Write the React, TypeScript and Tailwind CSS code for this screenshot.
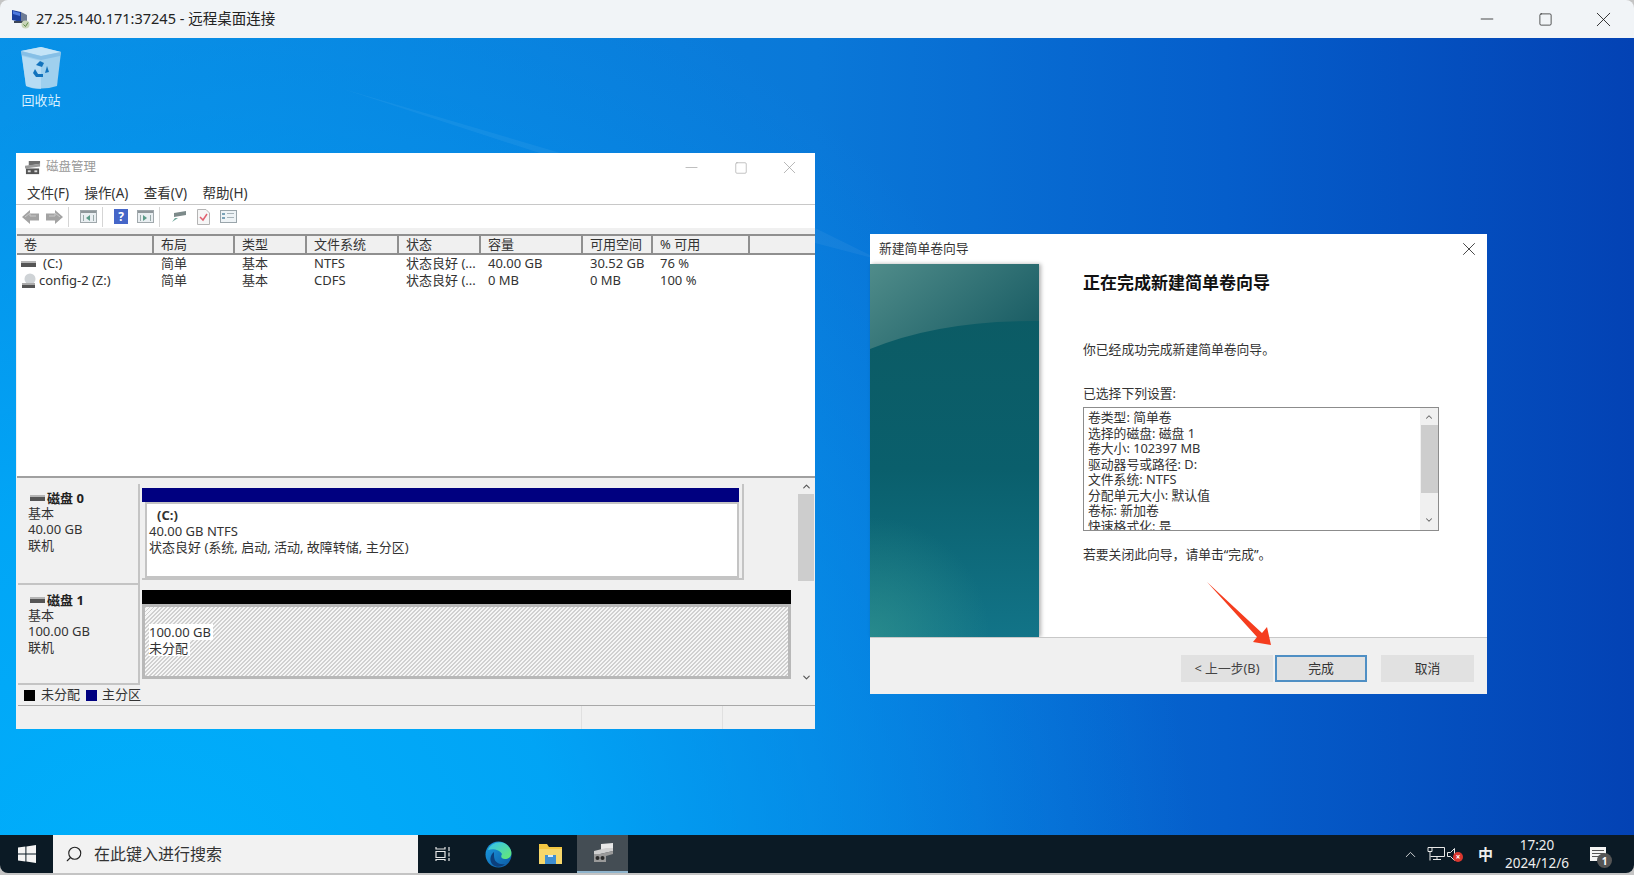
import { ChevronUp, ChevronDown, Minus, Square, X, Search } from 'lucide-react';

const uiFont = "font-['Noto_Sans','Noto_Sans_CJK_SC',sans-serif]";

function RecycleBin() {
  return (
    <svg width="42" height="44" viewBox="0 0 42 44">
      <path d="M1 5 L21 1 L41 6 L37 40 Q21 45 6 40 Z" fill="#9fd0ee" />
      <path d="M1 5 L21 1 L41 6 L21 10 Z" fill="#c4e4f7" />
      <path d="M1 5 L21 10 L41 6 L40 10 L21 14 L2 9 Z" fill="#86bfe6" />
      <path d="M6 40 L2 10 L21 15 L21 43 Q12 43 6 40 Z" fill="#bcdff5" opacity="0.8" />
      <path d="M16 19 L20 15 L24 17 L22 21 Z M27 20 L29 26 L25 27 Z M15 23 L18 28 L23 28 L23 31 L16 31 L13 27 Z" fill="#1273bd" />
    </svg>
  );
}

function RdpIcon() {
  return (
    <svg width="20" height="20" viewBox="0 0 20 20">
      <path d="M1 1 L10 3 L10 13 L1 11 Z" fill="#1c3f9e" />
      <path d="M2 2 L9 4 L9 7 L2 5 Z" fill="#4f7be0" />
      <path d="M10 3 L16 6 L16 14 L10 13 Z" fill="#6f7c95" />
      <rect x="3" y="12" width="11" height="2" fill="#3d4658" />
      <circle cx="14.5" cy="15.5" r="4" fill="#c9d4b9" />
      <path d="M12.5 15.5 L14.5 17.5 L17 13.5" stroke="#5f8a46" strokeWidth="1" fill="none" />
    </svg>
  );
}

function DiskMgmtIcon({ size = 17 }: { size?: number }) {
  return (
    <svg width={size} height={size} viewBox="0 0 17 15">
      <path d="M4 0 L16 0 L16 3 L4 5 Z" fill="#6e6e6e" />
      <path d="M0 5 L16 3 L16 6 L0 8 Z" fill="#9a9a9a" />
      <rect x="1" y="8" width="14" height="6" fill="#555" />
      <rect x="3" y="10" width="3" height="2" fill="#ddd" />
      <rect x="10" y="10" width="3" height="2" fill="#ddd" />
    </svg>
  );
}

function NavArrow({ flip }: { flip?: boolean }) {
  return (
    <svg width="17" height="14" viewBox="0 0 17 14" className={flip ? '-scale-x-100' : ''}>
      <path d="M0 7 L8 0 L8 3.5 L17 3.5 L17 10.5 L8 10.5 L8 14 Z" fill="#a3a3a3" />
      <path d="M3 7 L8 3 L8 6 L14 6" fill="none" stroke="#c9c9c9" strokeWidth="1" />
    </svg>
  );
}

function PaneIcon({ dir }: { dir: 'left' | 'right' }) {
  return (
    <svg width="17" height="13" viewBox="0 0 17 13">
      <rect x="0.5" y="0.5" width="16" height="12" fill="#e9eef1" stroke="#a0a8ac" />
      <rect x="1" y="1" width="15" height="2" fill="#8f979b" />
      <path d={dir === 'left' ? 'M10 5 L6 8 L10 11 Z' : 'M6 5 L10 8 L6 11 Z'} fill="#5a9a88" />
      <rect x="3" y="5" width="1" height="6" fill="#9aa" />
      <rect x="13" y="5" width="1" height="6" fill="#9aa" />
    </svg>
  );
}

function HddSmall() {
  return (
    <svg width="15" height="6" viewBox="0 0 15 6">
      <rect x="0" y="0" width="15" height="2" fill="#b5b5b5" />
      <rect x="0" y="2" width="15" height="4" fill="#555" />
    </svg>
  );
}

function Toolbar() {
  return (
    <div className="flex h-[23px] items-center bg-white pl-[6px]">
      <NavArrow />
      <div className="ml-[7px]"><NavArrow flip /></div>
      <div className="ml-[5px] h-[20px] w-px bg-[#d5d5d5]" />
      <div className="ml-[11px]"><PaneIcon dir="left" /></div>
      <div className="ml-[5px] h-[20px] w-px bg-[#d5d5d5]" />
      <div className="ml-[11px] flex h-[15px] w-[14px] items-center justify-center bg-[#4566c8] text-[12px] leading-none font-bold text-white">?</div>
      <div className="ml-[9px]"><PaneIcon dir="right" /></div>
      <div className="ml-[5px] h-[20px] w-px bg-[#d5d5d5]" />
      <svg className="ml-[10px]" width="17" height="13" viewBox="0 0 17 13">
        <path d="M4 3 L16 1 L16 5 L4 7 Z" fill="#7d8a8a" />
        <path d="M5 8 L8 8 L2 12 Z" fill="#6fa79a" />
      </svg>
      <svg className="ml-[10px]" width="13" height="16" viewBox="0 0 13 16">
        <path d="M0.5 0.5 L9 0.5 L12.5 4 L12.5 15.5 L0.5 15.5 Z" fill="#f6f6f6" stroke="#b4b4b4" />
        <path d="M3 8 L6 11 L10 5" fill="none" stroke="#e0606f" strokeWidth="1.5" />
      </svg>
      <svg className="ml-[10px]" width="17" height="13" viewBox="0 0 17 13">
        <rect x="0.5" y="0.5" width="16" height="12" fill="#eef3f6" stroke="#9aa5ab" />
        <rect x="2" y="3" width="3" height="2" fill="#7aa2b8" />
        <rect x="2" y="7" width="3" height="2" fill="#7aa2b8" />
        <rect x="7" y="3" width="7" height="1" fill="#a8b4ba" />
        <rect x="7" y="7" width="7" height="1" fill="#a8b4ba" />
      </svg>
    </div>
  );
}

const columns = [
  { label: '卷', width: 'w-[137px]' },
  { label: '布局', width: 'w-[81px]' },
  { label: '类型', width: 'w-[72px]' },
  { label: '文件系统', width: 'w-[92px]' },
  { label: '状态', width: 'w-[82px]' },
  { label: '容量', width: 'w-[102px]' },
  { label: '可用空间', width: 'w-[70px]' },
  { label: '% 可用', width: 'w-[97px]' },
  { label: '', width: 'flex-1' },
];

const rows = [
  { icon: 'hdd', name: '(C:)', cells: ['简单', '基本', 'NTFS', '状态良好 (...', '40.00 GB', '30.52 GB', '76 %'] },
  { icon: 'cd', name: 'config-2 (Z:)', cells: ['简单', '基本', 'CDFS', '状态良好 (...', '0 MB', '0 MB', '100 %'] },
];

function VolumeList() {
  return (
    <div className="ml-px h-[244px] border-b-2 border-[#a0a0a0] bg-white text-[13px] text-[#333]">
      <div className="flex h-[21px] border-y-2 border-[#8f8f8f] bg-[#f0f0f0]">
        {columns.map((c) => (
          <div key={c.label} className={`${c.width} flex items-center border-r-2 border-[#8f8f8f] pl-[7px] last:border-r-0`}>
            {c.label}
          </div>
        ))}
      </div>
      <div>
        {rows.map((r) => (
          <div key={r.name} className="flex h-[17px] items-center">
            <div className={`${columns[0].width} flex items-center pl-[4px]`}>
              {r.icon === 'hdd' ? (
                <>
                  <HddSmall />
                  <span className="ml-[7px]">{r.name}</span>
                </>
              ) : (
                <>
                  <svg width="16" height="16" viewBox="0 0 16 16">
                    <circle cx="9" cy="6" r="5.5" fill="#cfd3d6" />
                    <rect x="1" y="10" width="13" height="2" fill="#aaa" />
                    <rect x="1" y="12" width="13" height="3" fill="#555" />
                  </svg>
                  <span className="ml-[2px]">{r.name}</span>
                </>
              )}
            </div>
            {r.cells.map((cell, i) => (
              <div key={i} className={`${columns[i + 1].width} pl-[7px] whitespace-nowrap`}>
                {cell}
              </div>
            ))}
          </div>
        ))}
      </div>
    </div>
  );
}

function DiskLabel({ name, lines, h, pad }: { name: string; lines: string[]; h: string; pad: string }) {
  return (
    <div className={`${h} ${pad} w-[122px] shrink-0 border-r-2 border-b-2 border-[#c4c4c4] pl-[10px] text-[13px] leading-[16px] text-[#333]`}>
      <div className="flex h-[15px] items-center font-bold text-[#222]">
        <span className="ml-[2px] flex w-[17px]"><HddSmall /></span>
        {name}
      </div>
      {lines.map((l) => (
        <div key={l} className="h-[16px]">{l}</div>
      ))}
    </div>
  );
}

function DiskPane() {
  return (
    <div className="ml-[2px] flex h-[207px]">
      <div className="w-[779px] pt-[6px]">
        <div className="flex">
          <DiskLabel name="磁盘 0" lines={['基本', '40.00 GB', '联机']} h="h-[101px]" pad="pt-[6px]" />
          <div className="ml-[2px] h-[96px] w-[602px] border-r-2 border-b-2 border-[#c4c4c4] pt-[4px] pr-[3px]">
            <div className="h-[14px] bg-[#000080]" />
            <div className="ml-[3px] h-[76px] border-2 border-[#c4c4c4] bg-white pl-[2px] text-[13px] leading-[16px] text-[#333]">
              <div className="pt-[3px] pl-[8px] font-bold">(C:)</div>
              <div>40.00 GB NTFS</div>
              <div>状态良好 (系统, 启动, 活动, 故障转储, 主分区)</div>
            </div>
          </div>
        </div>
        <div className="flex">
          <DiskLabel name="磁盘 1" lines={['基本', '100.00 GB', '联机']} h="h-[100px]" pad="pt-[7px]" />
          <div className="ml-[2px] w-[649px] pt-[5px]">
            <div className="h-[14px] bg-black" />
            <div className="h-[75px] border-[3px] border-[#b8b8b8] bg-[repeating-linear-gradient(135deg,#d0d0d0_0,#d0d0d0_1.41px,#f6f6f6_1.41px,#f6f6f6_2.83px)] pt-[17px] pl-[4px] text-[13px] leading-[16px] text-[#333]">
              <div className="w-fit bg-white pr-[2px]">100.00 GB</div>
              <div className="w-fit bg-white pr-[2px]">未分配</div>
            </div>
          </div>
        </div>
      </div>
      <div className="ml-auto flex w-[18px] flex-col items-center text-[#555]">
        <ChevronUp size={11} strokeWidth={2.5} className="mt-[3px]" />
        <div className="mt-[2px] h-[87px] w-[16px] bg-[#cdcdcd]" />
        <div className="flex-1" />
        <ChevronDown size={11} strokeWidth={2.5} className="mb-[2px]" />
      </div>
    </div>
  );
}

function DiskWindow() {
  return (
    <div className={`absolute top-[153px] left-[16px] flex h-[576px] w-[799px] flex-col bg-[#f0f0f0] ${uiFont}`}>
      <div className="flex h-[29px] items-center bg-white pl-[9px]">
        <DiskMgmtIcon size={16} />
        <span className="ml-[5px] text-[12.5px] text-[#999]">磁盘管理</span>
        <div className="mr-px ml-auto flex items-center text-[#9a9a9a]">
          <span className="flex w-[49px] justify-center"><Minus size={19} strokeWidth={0.8} /></span>
          <span className="flex w-[49px] justify-center"><Square size={14} strokeWidth={1} /></span>
          <span className="flex w-[49px] justify-center"><X size={21} strokeWidth={0.8} /></span>
        </div>
      </div>
      <div className="flex h-[23px] items-center gap-[15.5px] border-b border-[#c8c8c8] bg-white pl-[11px] text-[13.5px] text-[#333]">
        <span>文件(F)</span>
        <span>操作(A)</span>
        <span>查看(V)</span>
        <span>帮助(H)</span>
      </div>
      <Toolbar />
      <div className="h-[6px] bg-[#f0f0f0]" />
      <VolumeList />
      <DiskPane />
      <div className="ml-[2px] flex h-[21px] items-center gap-[6px] border-b border-[#a8a8a8] pl-[6px] text-[13px] text-[#333]">
        <span className="flex items-center gap-[6px]"><i className="h-[11px] w-[11px] bg-black" />未分配</span>
        <span className="flex items-center gap-[5px]"><i className="h-[11px] w-[11px] bg-[#000080]" />主分区</span>
      </div>
      <div className="flex flex-1">
        <div className="w-[566px] border-r border-[#e0e0e0]" />
        <div className="w-[141px] border-r border-[#e0e0e0]" />
      </div>
    </div>
  );
}

function WizardArt() {
  return (
    <div className="shrink-0 shadow-[2px_0_4px_rgba(0,0,0,0.3)]">
      <svg width="169" height="373" viewBox="0 0 169 373" className="block">
        <defs>
          <linearGradient id="wizBase" x1="0" y1="0" x2="0" y2="1">
            <stop offset="0" stopColor="#0c5a62" />
            <stop offset="0.55" stopColor="#0a5f6c" />
            <stop offset="1" stopColor="#127488" />
          </linearGradient>
          <linearGradient id="wizTop" x1="0" y1="0" x2="1" y2="0.6">
            <stop offset="0" stopColor="#508c8a" />
            <stop offset="1" stopColor="#1c5f66" />
          </linearGradient>
          <radialGradient id="wizGlow" gradientUnits="userSpaceOnUse" cx="0" cy="373" r="120">
            <stop offset="0" stopColor="#3a9c90" stopOpacity="0.55" />
            <stop offset="1" stopColor="#3a9c90" stopOpacity="0" />
          </radialGradient>
        </defs>
        <rect width="169" height="373" fill="url(#wizBase)" />
        <rect width="169" height="373" fill="url(#wizGlow)" />
        <path d="M0 85 Q70 56 169 57 L169 0 L0 0 Z" fill="url(#wizTop)" />
      </svg>
    </div>
  );
}

const settings = [
  '卷类型: 简单卷',
  '选择的磁盘: 磁盘 1',
  '卷大小: 102397 MB',
  '驱动器号或路径: D:',
  '文件系统: NTFS',
  '分配单元大小: 默认值',
  '卷标: 新加卷',
  '快速格式化: 是',
];

function WizardWindow() {
  return (
    <div className={`absolute top-[234px] left-[870px] flex h-[460px] w-[617px] flex-col bg-white text-[12.8px] text-[#333] ${uiFont}`}>
      <div className="flex h-[30px] items-center justify-between pr-[7px] pl-[9px]">
        <span>新建简单卷向导</span>
        <X size={22} strokeWidth={0.9} className="text-[#222]" />
      </div>
      <div className="flex h-[373px]">
        <WizardArt />
        <div className="flex-1 pl-[44px]">
          <h1 className="mt-[7px] h-[24px] text-[17px] leading-[24px] font-bold text-[#111]">正在完成新建简单卷向导</h1>
          <p className="mt-[45px] leading-[18px]">你已经成功完成新建简单卷向导。</p>
          <p className="mt-[26px] leading-[18px]">已选择下列设置:</p>
          <div className="mt-[5px] flex h-[124px] w-[356px] overflow-hidden border border-[#8c8c8c]">
            <div className="flex-1 overflow-hidden pt-[2px] pl-[4px] leading-[15.5px]">
              {settings.map((s) => (
                <div key={s}>{s}</div>
              ))}
            </div>
            <div className="flex w-[18px] flex-col items-center bg-[#f0f0f0] text-[#666]">
              <ChevronUp size={10} strokeWidth={2.5} className="mt-[4px]" />
              <div className="mt-[3px] h-[68px] w-[17px] bg-[#cdcdcd]" />
              <div className="flex-1" />
              <ChevronDown size={10} strokeWidth={2.5} className="mb-[5px]" />
            </div>
          </div>
          <p className="mt-[14px] leading-[18px]">若要关闭此向导，请单击“完成”。</p>
        </div>
      </div>
      <div className="flex flex-1 items-start border-t border-[#c8c8c8] bg-[#f0f0f0] pt-[17px] pl-[311px]">
        <button className="h-[27px] w-[92px] bg-[#e1e1e1] text-[#444]">&lt; 上一步(B)</button>
        <button className="ml-[2px] h-[27px] w-[92px] border-2 border-[#4f8fc4] bg-[#e1e1e1]">完成</button>
        <button className="ml-[14px] h-[27px] w-[93px] bg-[#e1e1e1]">取消</button>
      </div>
    </div>
  );
}

function Taskbar() {
  return (
    <div className={`flex h-[38px] shrink-0 items-center rounded-b-[8px] bg-[#0b1a25] text-white ${uiFont}`}>
      <div className="flex w-[53px] justify-center">
        <svg width="18" height="18" viewBox="0 0 18 18" fill="#f4f4f4">
          <path d="M0 2.6 L7.4 1.5 L7.4 8.5 L0 8.5 Z M8.4 1.4 L18 0 L18 8.5 L8.4 8.5 Z M0 9.5 L7.4 9.5 L7.4 16.5 L0 15.4 Z M8.4 9.5 L18 9.5 L18 18 L8.4 16.6 Z" />
        </svg>
      </div>
      <div className="flex h-full w-[365px] items-center bg-[#f2f2f2] pl-[12px] text-[16px] text-[#333]">
        <Search size={18} strokeWidth={1.5} className="-scale-x-100 text-[#222]" />
        <span className="ml-[11px]">在此键入进行搜索</span>
      </div>
      <div className="flex w-[50px] justify-center">
        <svg width="18" height="16" viewBox="0 0 18 16" fill="none" stroke="#e8e8e8" strokeWidth="1.2">
          <path d="M2 1 L2 3 L11 3 L11 1 M2 5.5 h9 v6 h-9 z M2 15 L2 13.5 L11 13.5 L11 15 M15 1 v4 M15 6.5 v4 M15 12 v3" />
        </svg>
      </div>
      <div className="flex w-[60px] justify-center">
        <svg width="27" height="27" viewBox="0 0 27 27">
          <defs>
            <linearGradient id="edgeA" x1="0" y1="0" x2="1" y2="1">
              <stop offset="0" stopColor="#1b9de2" />
              <stop offset="1" stopColor="#0c59a4" />
            </linearGradient>
            <linearGradient id="edgeB" x1="0" y1="0" x2="1" y2="1">
              <stop offset="0" stopColor="#35c1f1" />
              <stop offset="1" stopColor="#66eb6e" />
            </linearGradient>
          </defs>
          <circle cx="13.5" cy="13.5" r="13" fill="url(#edgeA)" />
          <path d="M3 9 C6 1 18 -2 24 6 C28 11 27 17 21 18 C17 18.500 15 16 17 13 C15 9 8 7 3 9 Z" fill="url(#edgeB)" />
          <path d="M9 15 C9 21 14 24 20 23 C17 26 12 27 8 24 C4 20 5 14 9 11 C9 12 9 14 9 15 Z" fill="#0c3f7c" />
        </svg>
      </div>
      <div className="flex w-[44px] justify-center">
        <svg width="25" height="24" viewBox="0 0 25 24">
          <path d="M1 2 L9 2 L11 5 L24 5 L24 22 L1 22 Z" fill="#f3c742" />
          <rect x="1" y="7" width="23" height="15" fill="#f6d76b" />
          <rect x="7" y="13" width="11" height="9" fill="#3f8fd1" />
          <rect x="10" y="13" width="5" height="2" fill="#d9ecf7" />
        </svg>
      </div>
      <div className="ml-[5px] flex h-full w-[51px] items-center justify-center border-b-2 border-[#8fb4cc] bg-[#444d54]">
        <svg width="22" height="20" viewBox="0 0 22 20">
          <path d="M9 1 L21 0 L21 5 L9 7 Z" fill="#e8e8e8" />
          <path d="M2 8 L14 5 L21 5 L21 8 L8 11 L2 11 Z" fill="#cfcfcf" />
          <path d="M2 11 L8 11 L21 8 L21 11 L14 13 L14 19 L2 19 Z" fill="#9a9a9a" />
          <circle cx="5.500" cy="15" r="2" fill="#2a2a2a" />
          <circle cx="10.500" cy="15" r="2" fill="#2a2a2a" />
        </svg>
      </div>
      <div className="ml-auto flex h-full items-center text-[#eee]">
        <ChevronUp size={17} strokeWidth={1.2} />
        <svg className="ml-[8px]" width="18" height="14" viewBox="0 0 18 14" fill="none" stroke="#e8e8e8" strokeWidth="1">
          <path d="M3.500 0.500 h14 v9 h-14 M1 0.500 h4 v4 h-4 z M3 4.500 v9 M6 12.500 h8 M10 9.500 v3" />
        </svg>
        <span className="relative ml-[2px] flex w-[18px]">
          <svg width="9" height="13" viewBox="0 0 9 13" fill="none" stroke="#e8e8e8" strokeWidth="1">
            <path d="M0.500 4.500 h3 l4 -4 v12 l-4 -4 h-3 z" />
          </svg>
          <span className="absolute top-[4px] left-[6px] flex h-[10px] w-[10px] items-center justify-center rounded-full bg-[#d9362e] text-[8px] leading-none font-bold text-white">×</span>
        </span>
        <span className="ml-[13px] text-[15px] font-bold">中</span>
        <div className="ml-[8px] flex w-[72px] flex-col items-center text-[13.5px] leading-[18px]">
          <span>17:20</span>
          <span>2024/12/6</span>
        </div>
        <span className="relative mr-[28px] ml-[17px] block h-[14px] w-[16px] bg-[#f4f4f4]">
          <i className="absolute top-[3px] left-[2px] h-px w-[12px] bg-[#555]" />
          <i className="absolute top-[6px] left-[2px] h-px w-[12px] bg-[#555]" />
          <i className="absolute top-[9px] left-[2px] h-px w-[8px] bg-[#555]" />
          <span className="absolute top-[6px] left-[7px] flex h-[15px] w-[15px] items-center justify-center rounded-full bg-[#555] text-[10px] leading-none font-bold text-white">1</span>
        </span>
      </div>
    </div>
  );
}

function Wallpaper() {
  return (
    <svg className="absolute inset-0 h-full w-full" viewBox="0 0 1634 797" preserveAspectRatio="none">
      <defs>
        <linearGradient id="wallBase" x1="0" y1="0" x2="1" y2="0">
          <stop offset="0" stopColor="#0a90e4" />
          <stop offset="0.5" stopColor="#0a78d8" />
          <stop offset="0.75" stopColor="#055ecb" />
          <stop offset="1" stopColor="#0342b4" />
        </linearGradient>
        <radialGradient id="wallGlow" gradientUnits="userSpaceOnUse" cx="150" cy="880" r="1050">
          <stop offset="0" stopColor="#00b0fc" stopOpacity="1" />
          <stop offset="0.4" stopColor="#00a8f8" stopOpacity="0.9" />
          <stop offset="1" stopColor="#0090f0" stopOpacity="0" />
        </radialGradient>
      </defs>
      <rect width="1634" height="797" fill="url(#wallBase)" />
      <rect width="1634" height="797" fill="url(#wallGlow)" />
      <path d="M340 50 L815 190 L880 222 L815 205 Z" fill="#ffffff" opacity="0.05" />
    </svg>
  );
}

export default function App() {
  return (
    <div className={`flex h-[875px] w-[1634px] flex-col overflow-hidden bg-[#c4c4c4] ${uiFont}`}>
      <div className="flex h-[38px] shrink-0 items-center rounded-t-[8px] bg-[#f1f4f7] pl-[11px]">
        <RdpIcon />
        <span className="ml-[5px] text-[14.5px] text-[#222]">27.25.140.171:37245 - 远程桌面连接</span>
        <div className="mr-[2px] ml-auto flex items-center text-[#111]">
          <span className="flex w-[58px] justify-center"><Minus size={20} strokeWidth={0.9} /></span>
          <span className="flex w-[58px] justify-center"><Square size={15} strokeWidth={1.1} /></span>
          <span className="flex w-[58px] justify-center"><X size={25} strokeWidth={0.8} /></span>
        </div>
      </div>
      <div className="relative h-[797px] shrink-0">
        <Wallpaper />
        <div className="absolute top-[8px] left-[20px] flex w-[42px] flex-col items-center">
          <RecycleBin />
          <span className="mt-px text-[13px] leading-[18px] whitespace-nowrap text-[#d8f0ff]">回收站</span>
        </div>
      </div>
      <DiskWindow />
      <WizardWindow />
      <svg className="absolute top-[580px] left-[1205px]" width="70" height="68" viewBox="0 0 70 68">
        <path d="M2 2 L57 53 L62 47 L66 65 L48 62 L52 57 Z" fill="#f53d1e" />
      </svg>
      <Taskbar />
    </div>
  );
}
